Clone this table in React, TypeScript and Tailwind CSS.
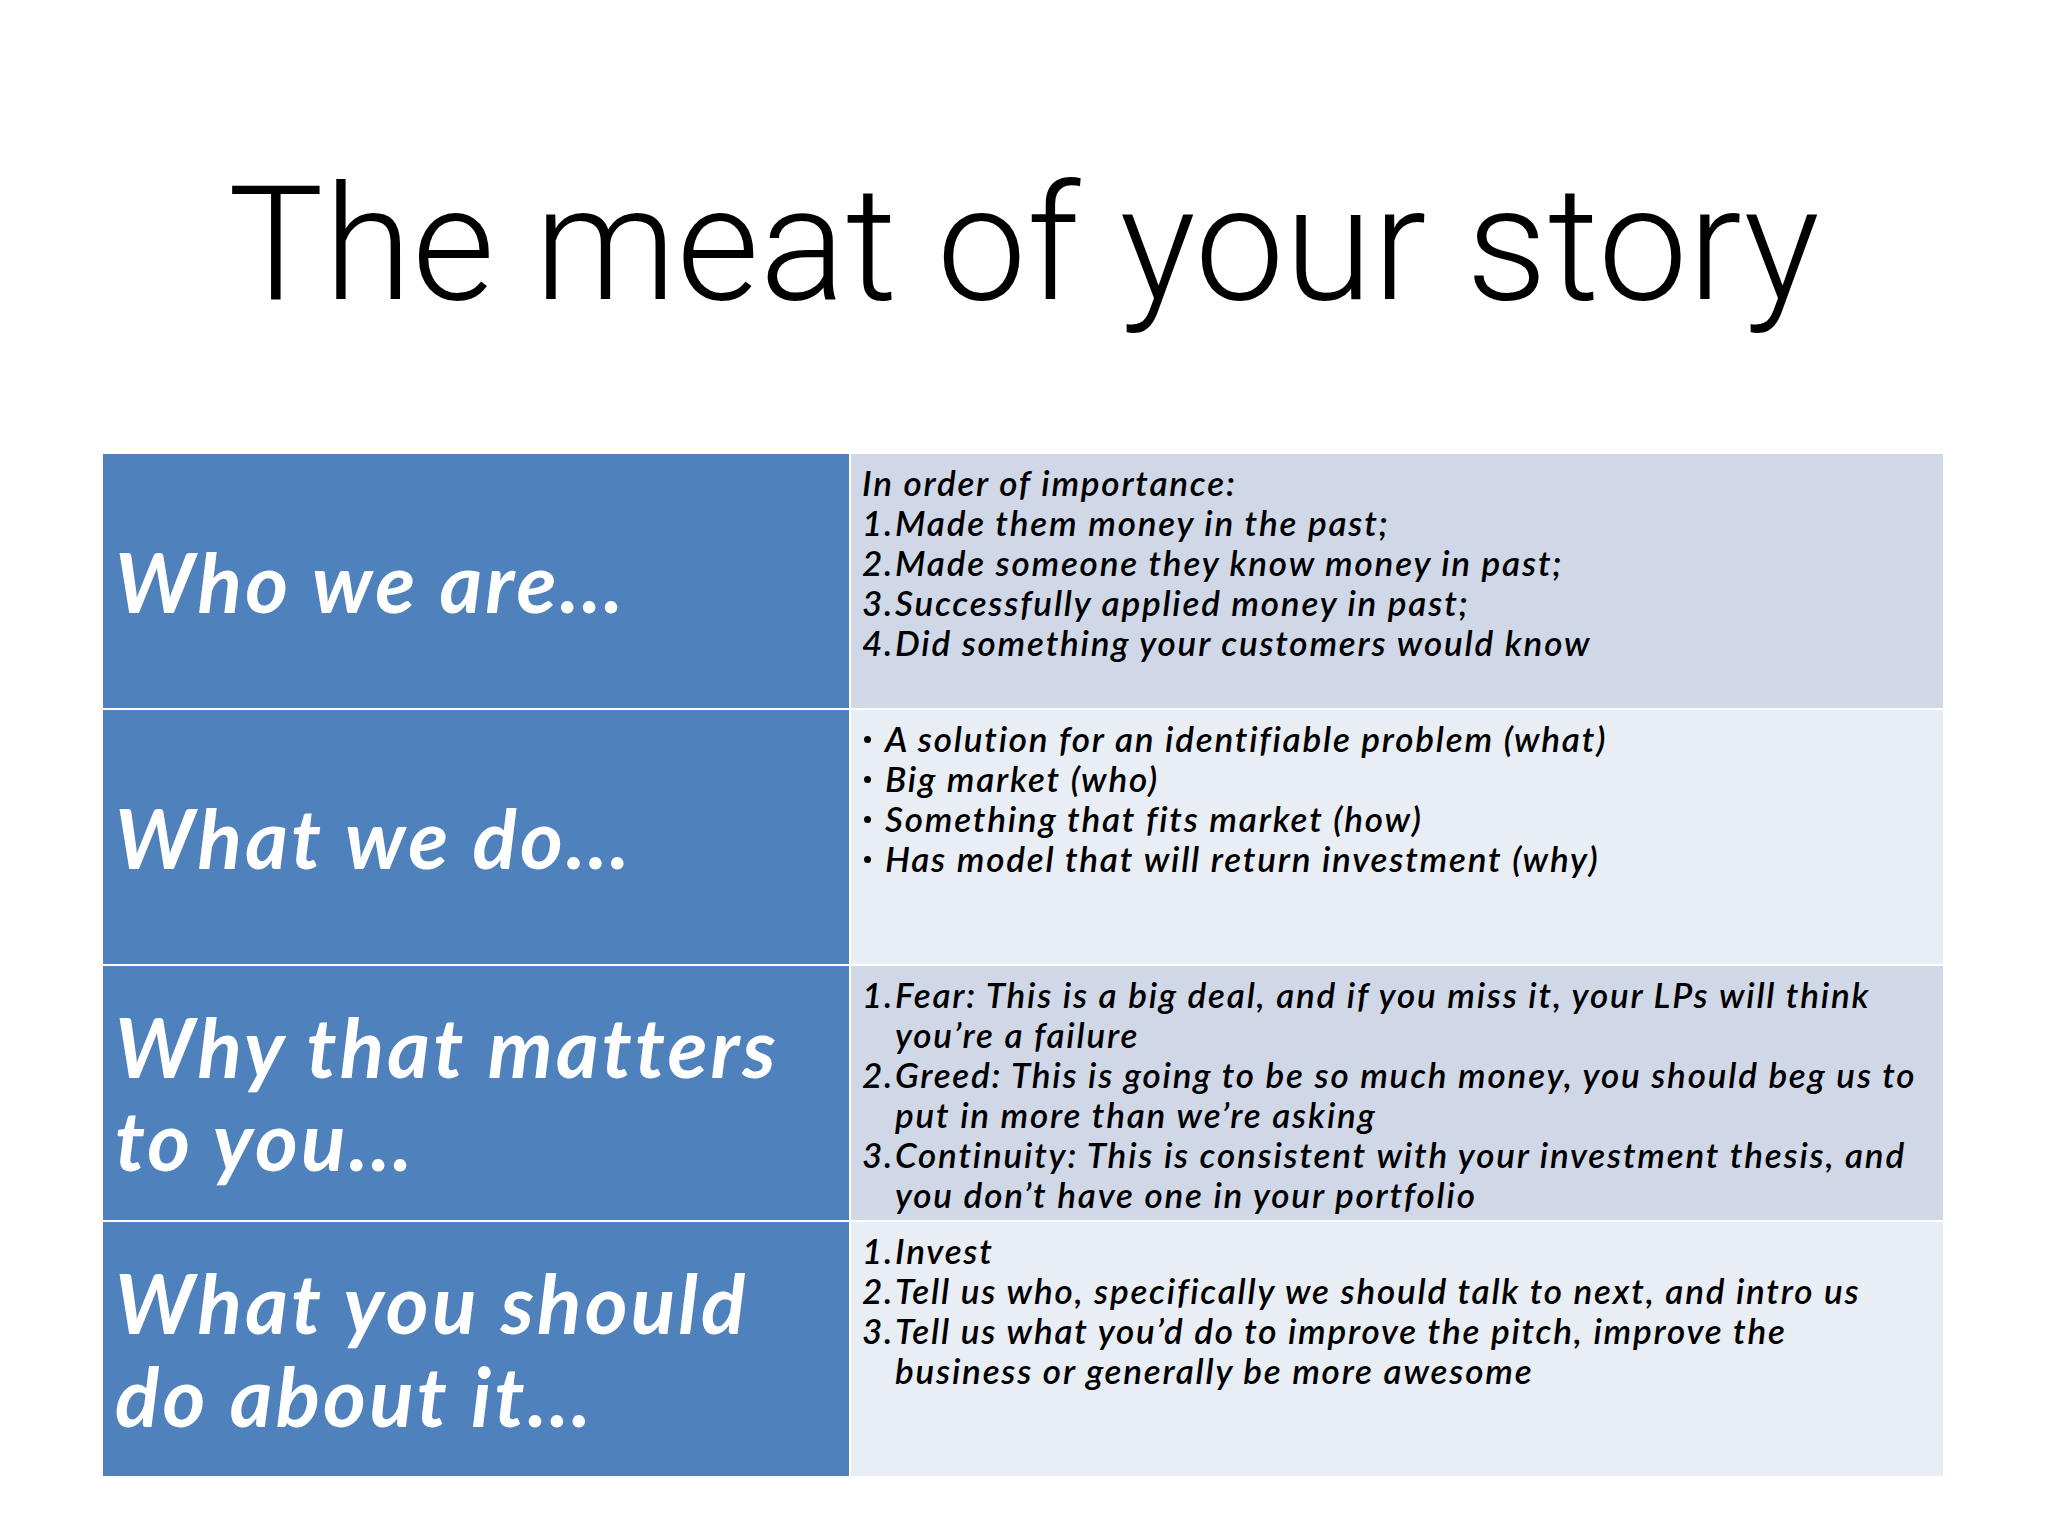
import React from "react";

function Num({ n, children }: { n: string; children: React.ReactNode }) {
  return (
    <div className="flex">
      <span className="w-[33px] shrink-0">{n}</span>
      <span>{children}</span>
    </div>
  );
}

function Bullet({ children }: { children: React.ReactNode }) {
  return (
    <div className="flex">
      <span className="w-[23px] shrink-0 h-[40px] flex items-center pl-[2px] pt-[3px]">
        <span className="block w-[7px] h-[7px] rounded-full bg-black" />
      </span>
      <span>{children}</span>
    </div>
  );
}

function LeftCell({ lines }: { lines: string[] }) {
  return (
    <div className="bg-[#4f81bd] flex items-center pl-[12px] pr-2">
      <div className="text-white italic font-bold text-[82px] leading-[93px] tracking-[3.2px] whitespace-nowrap font-['Lato',sans-serif]">
        {lines.map((l, i) => (
          <div key={i}>{l}</div>
        ))}
      </div>
    </div>
  );
}

function RightCell({ dark, children }: { dark?: boolean; children: React.ReactNode }) {
  return (
    <div
      className={
        (dark ? "bg-[#d0d8e8]" : "bg-[#e9edf4]") +
        " pl-[11px] pr-2 pt-[8px] text-black italic font-semibold text-[35px] leading-[40px] tracking-[1.8px] whitespace-nowrap font-['Lato',sans-serif]"
      }
    >
      {children}
    </div>
  );
}

export default function App() {
  return (
    <div className="w-[2048px] h-[1536px] bg-white relative overflow-hidden">
      <div className="pt-[150px] h-[454px] flex justify-center">
        <h1 className="text-[160px] leading-[190px] font-light text-black font-['Roboto',sans-serif] tracking-[0.3px]">
          The meat of your story
        </h1>
      </div>
      <div className="ml-[103px] w-[1840px] grid grid-cols-[746px_1092px] grid-rows-[254px_254px_254px_254px] gap-[2px] bg-white">
        <LeftCell lines={["Who we are…"]} />
        <RightCell dark>
          <div>In order of importance:</div>
          <Num n="1.">Made them money in the past;</Num>
          <Num n="2.">Made someone they know money in past;</Num>
          <Num n="3.">Successfully applied money in past;</Num>
          <Num n="4.">Did something your customers would know</Num>
        </RightCell>

        <LeftCell lines={["What we do…"]} />
        <RightCell>
          <Bullet>A solution for an identifiable problem (what)</Bullet>
          <Bullet>Big market (who)</Bullet>
          <Bullet>Something that fits market (how)</Bullet>
          <Bullet>Has model that will return investment (why)</Bullet>
        </RightCell>

        <LeftCell lines={["Why that matters", "to you…"]} />
        <RightCell dark>
          <Num n="1.">
            Fear: This is a big deal, and if you miss it, your LPs will think
            <br />
            you’re a failure
          </Num>
          <Num n="2.">
            Greed: This is going to be so much money, you should beg us to
            <br />
            put in more than we’re asking
          </Num>
          <Num n="3.">
            Continuity: This is consistent with your investment thesis, and
            <br />
            you don’t have one in your portfolio
          </Num>
        </RightCell>

        <LeftCell lines={["What you should", "do about it…"]} />
        <RightCell>
          <Num n="1.">Invest</Num>
          <Num n="2.">Tell us who, specifically we should talk to next, and intro us</Num>
          <Num n="3.">
            Tell us what you’d do to improve the pitch, improve the
            <br />
            business or generally be more awesome
          </Num>
        </RightCell>
      </div>
    </div>
  );
}
